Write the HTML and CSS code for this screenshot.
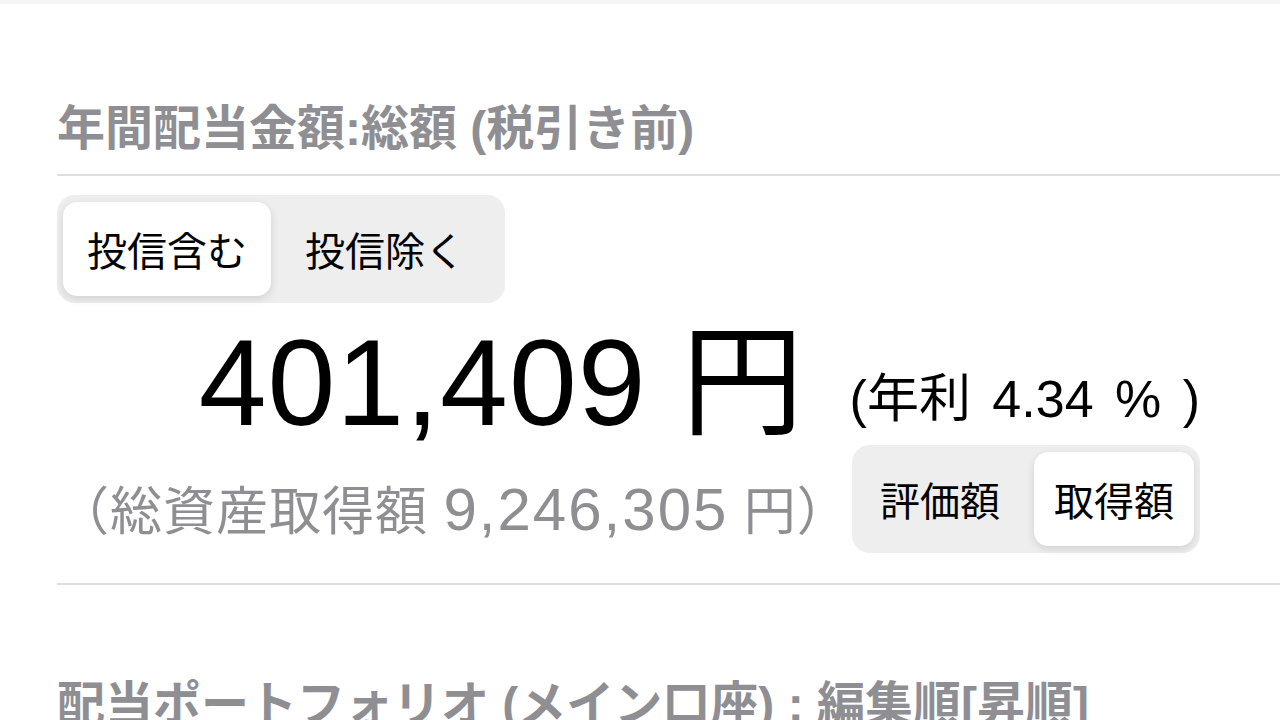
FILE: index.html
```html
<!DOCTYPE html>
<html lang="ja">
<head>
  <meta charset="UTF-8">
  <meta name="viewport" content="width=device-width, initial-scale=1.0">
  <title>年間配当金額</title>
  <link rel="stylesheet" href="styles.css">
</head>
<body>
<div class="topbar"></div>

<main class="panel">

  <h2 class="title">年間配当金額:総額 (税引き前)</h2>
  <div class="rule"></div>

  <div class="segmented seg-fund">
    <span class="seg active">投信含む</span>
    <span class="seg">投信除く</span>
  </div>

  <div class="amount">
    <div class="amount-row total-row">
      <span class="total">401,409 円</span>
      <span class="yield">(年利 4.34 % )</span>
    </div>
    <div class="amount-row basis-row">
      <span class="basis">（総資産取得額 <span class="num">9,246,305</span> 円）</span>
      <div class="segmented seg-basis">
        <span class="seg">評価額</span>
        <span class="seg active">取得額</span>
      </div>
    </div>
  </div>

  <div class="rule rule-bottom"></div>

  <h2 class="title title-next">配当ポートフォリオ (メイン口座) : 編集順[昇順]</h2>

</main>
</body>
</html>
```

FILE: styles.css
```css
* {
  margin: 0;
  padding: 0;
  box-sizing: border-box;
}

body {
  background: #ffffff;
  color: #000000;
  font-family: "Liberation Sans", "Noto Sans CJK JP", sans-serif;
  overflow: hidden;
}

.topbar {
  height: 4px;
  background: #f5f5f5;
}

.panel {
  padding-left: 57px;
}

.title {
  margin-top: 97px;
  font-size: 48px;
  line-height: 56px;
  font-weight: 700;
  color: #8e8e93;
  white-space: nowrap;
}

.title-next {
  margin-top: 92px;
}

.rule {
  height: 2px;
  margin-top: 17px;
  background: #dedede;
}

.rule-bottom {
  margin-top: 30px;
}

/* segmented controls */
.segmented {
  display: grid;
  height: 108px;
  padding: 7px 6px;
  border-radius: 18px;
  background: #eeeeef;
}

.seg {
  display: flex;
  align-items: center;
  justify-content: center;
  border-radius: 14px;
  font-size: 40px;
  white-space: nowrap;
}

.seg.active {
  background: #ffffff;
  box-shadow: 0 3px 8px rgba(0, 0, 0, 0.12), 0 0 1px rgba(0, 0, 0, 0.06);
}

.seg-fund {
  width: 448px;
  margin-top: 19px;
  grid-template-columns: 208px 1fr;
}

.seg-basis {
  width: 350px;
  grid-template-columns: 1fr 160px;
}

.seg-basis .seg:first-child {
  padding-right: 12px;
}

/* amount */
.amount {
  padding-right: 80px;
}

.amount-row {
  display: flex;
  justify-content: flex-end;
}

.total-row {
  margin-top: 19px;
  align-items: flex-end;
}

.total {
  font-size: 122px;
  line-height: 122px;
  letter-spacing: 1px;
}

.yield {
  margin-left: 45px;
  margin-bottom: 19px;
  font-size: 52px;
  line-height: 52px;
  word-spacing: 7px;
}

.basis-row {
  align-items: center;
  margin-top: 1px;
}

.basis {
  padding-top: 16px;
  margin-right: 2px;
  font-size: 52px;
  letter-spacing: 1px;
  color: #8e8e93;
  white-space: nowrap;
}

.basis .num {
  font-size: 60px;
  letter-spacing: 2px;
}
```
